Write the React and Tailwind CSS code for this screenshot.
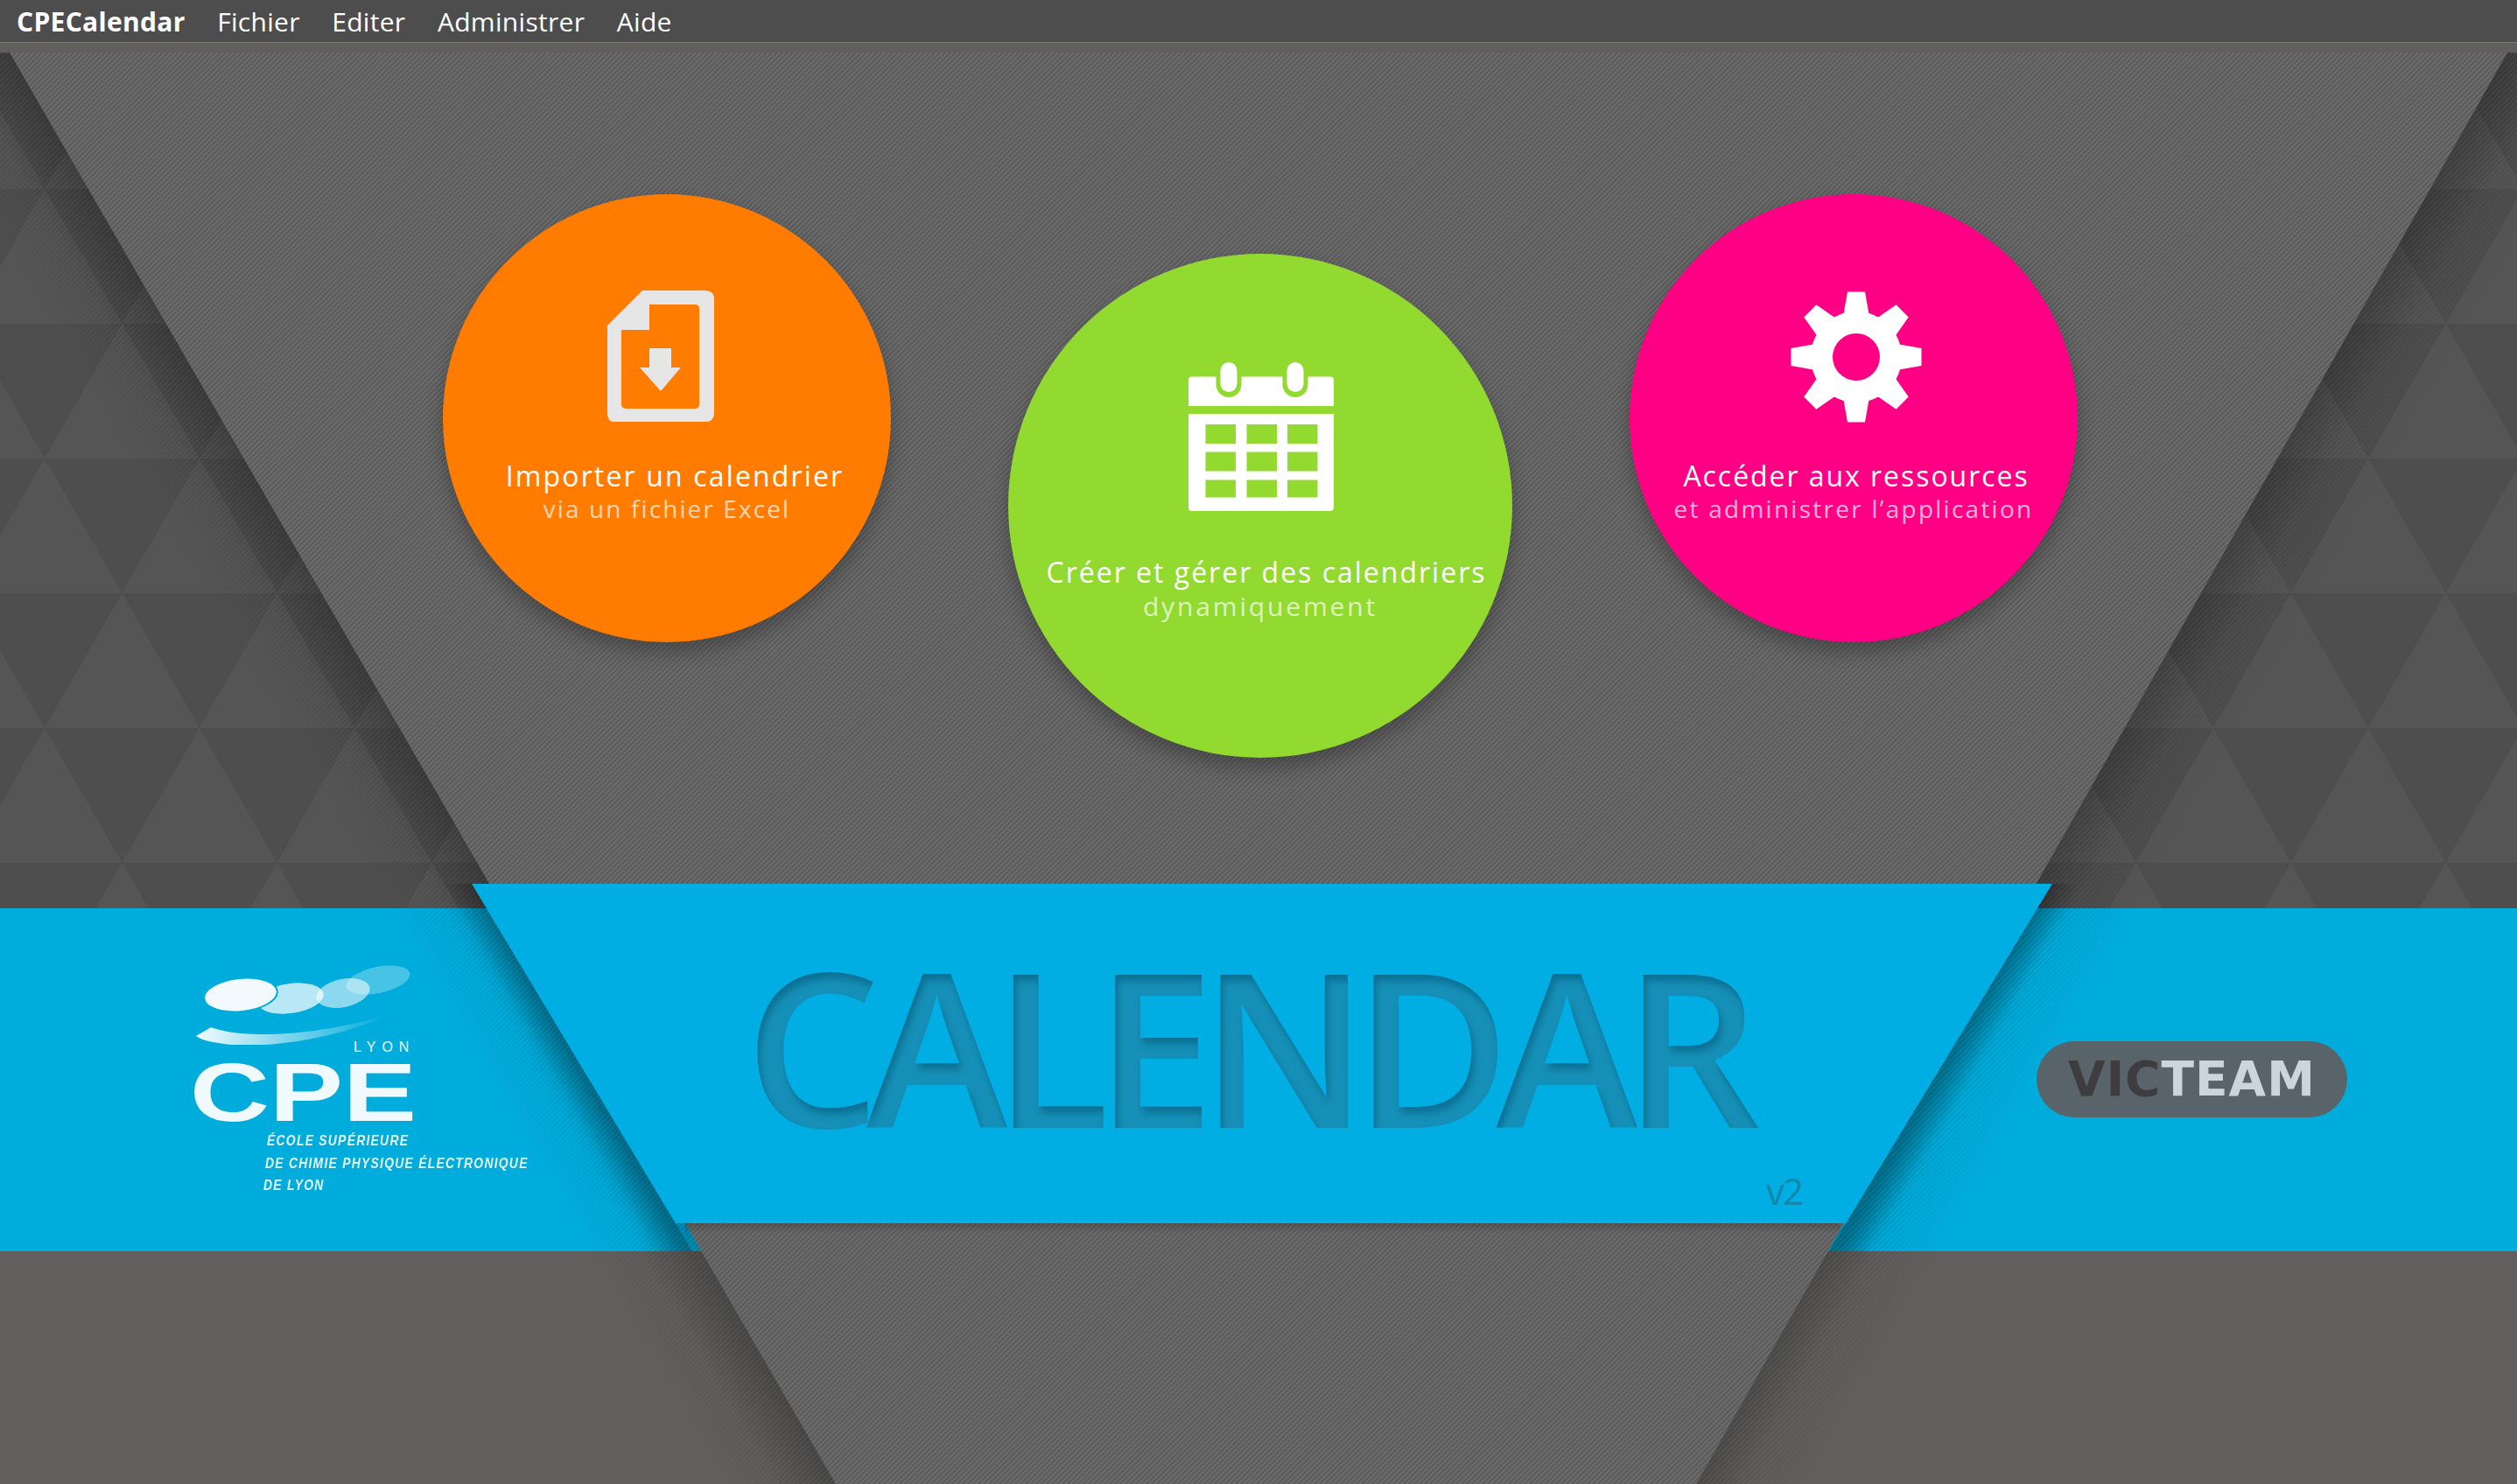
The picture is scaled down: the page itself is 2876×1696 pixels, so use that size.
const menuItems = ["Fichier", "Editer", "Administrer", "Aide"];

function FileIcon() {
  return (
    <svg width="122" height="150" viewBox="0 0 122 150" className="mr-[14px]">
      <path
        fillRule="evenodd"
        fill="#e6e6e6"
        d="M40 0H112Q122 0 122 10V140Q122 150 112 150H8Q0 150 0 140V40ZM48 16V45H16V130Q16 135 22 135H100Q105 135 105 130V21Q105 16 100 16ZM48 66H73V88H84L61 115L37 88H48Z"
      />
    </svg>
  );
}

function CalendarIcon() {
  const xs = [19.5, 66.5, 113];
  const ys = [71, 102.5, 134.5];
  return (
    <svg width="166" height="170" viewBox="0 0 166 170">
      <path fill="#fff" d="M4 16.5H162Q166 16.5 166 20.5V50H0V20.5Q0 16.5 4 16.5Z" />
      <path fill="#fff" d="M0 59H166V166Q166 170 162 170H4Q0 170 0 166Z" />
      {[46, 122].map((x) => (
        <g key={x}>
          <rect x={x - 14.5} y="0" width="29" height="40" rx="14.5" fill="#92d930" />
          <rect x={x - 9.5} y="0" width="19" height="34" rx="9.5" fill="#fff" />
        </g>
      ))}
      {ys.map((y, r) =>
        xs.map((x) => (
          <rect key={`${x}-${y}`} x={x} y={y} width="34.5" height={r === 2 ? 20 : 22} fill="#92d930" />
        )),
      )}
    </svg>
  );
}

function GearIcon() {
  return (
    <svg width="150" height="150" viewBox="-75 -75 150 150" className="ml-[6px]">
      <circle r="52" fill="#fff" />
      {[0, 45, 90, 135, 180, 225, 270, 315].map((deg) => (
        <path key={deg} fill="#fff" transform={`rotate(${deg})`} d="M-15 -46L-10 -74.5H10L15 -46Z" />
      ))}
      <circle r="27" fill="#ff0084" />
    </svg>
  );
}

function Circle({ className, icon, title, sub, titleClass, subClass, iconClass }) {
  return (
    <div className={`flex shrink-0 flex-col items-center rounded-full shadow-[0_12px_22px_rgba(0,0,0,0.28)] ${className}`}>
      <div className={iconClass}>{icon}</div>
      <p className={`whitespace-nowrap text-[32px] leading-[38px] text-white ${titleClass}`}>{title}</p>
      <p className={`whitespace-nowrap leading-[36px] text-white/70 ${subClass}`}>{sub}</p>
    </div>
  );
}

// funnel shape, its shadows and the triangle wallpaper
function Backdrop() {
  return (
    <svg className="pointer-events-none absolute left-0 top-0" width="2876" height="1696" viewBox="0 0 2876 1696">
      <defs>
        <pattern id="tri" patternUnits="userSpaceOnUse" x="51" y="524" width="177" height="308">
          <path fill="#555555" d="M0 0L88.5 154H0ZM177 0V154H88.5ZM88.5 154L177 308H0Z" />
        </pattern>
        <pattern id="twill" patternUnits="userSpaceOnUse" width="6" height="6">
          <rect width="6" height="6" fill="#6c6c6c" />
          <path d="M-1 1L1 -1M0 6L6 0M5 7L7 5" stroke="#5b5b5b" strokeWidth="2.1" />
        </pattern>
        <pattern id="hatch" patternUnits="userSpaceOnUse" width="6" height="6">
          <path d="M-1 1L1 -1M0 6L6 0M5 7L7 5" stroke="#000" strokeOpacity="0.15" strokeWidth="2.4" />
        </pattern>
        <linearGradient id="fadeL" gradientUnits="userSpaceOnUse" x1="11" y1="60" x2="-87" y2="117">
          <stop offset="0" stopColor="#fff" />
          <stop offset="1" stopColor="#fff" stopOpacity="0" />
        </linearGradient>
        <linearGradient id="fadeR" gradientUnits="userSpaceOnUse" x1="2865" y1="60" x2="2963" y2="116">
          <stop offset="0" stopColor="#fff" />
          <stop offset="1" stopColor="#fff" stopOpacity="0" />
        </linearGradient>
        <linearGradient id="darkL" gradientUnits="userSpaceOnUse" x1="11" y1="60" x2="-41" y2="90">
          <stop offset="0" stopColor="#000" stopOpacity="0.18" />
          <stop offset="1" stopColor="#000" stopOpacity="0" />
        </linearGradient>
        <linearGradient id="darkR" gradientUnits="userSpaceOnUse" x1="2865" y1="60" x2="2917" y2="90">
          <stop offset="0" stopColor="#000" stopOpacity="0.18" />
          <stop offset="1" stopColor="#000" stopOpacity="0" />
        </linearGradient>
        <linearGradient id="trapL" gradientUnits="userSpaceOnUse" x1="539" y1="1010" x2="513" y2="1025">
          <stop offset="0" stopColor="#000" stopOpacity="0.22" />
          <stop offset="1" stopColor="#000" stopOpacity="0" />
        </linearGradient>
        <linearGradient id="trapR" gradientUnits="userSpaceOnUse" x1="2345" y1="1010" x2="2371" y2="1025">
          <stop offset="0" stopColor="#000" stopOpacity="0.22" />
          <stop offset="1" stopColor="#000" stopOpacity="0" />
        </linearGradient>
        <linearGradient id="under" x1="0" y1="0" x2="0" y2="1">
          <stop offset="0" stopColor="#000" stopOpacity="0.18" />
          <stop offset="1" stopColor="#000" stopOpacity="0" />
        </linearGradient>
        <mask id="maskL" maskUnits="userSpaceOnUse" x="-300" y="0" width="3500" height="1800">
          <rect x="-300" y="0" width="3500" height="1800" fill="url(#fadeL)" />
        </mask>
        <mask id="maskR" maskUnits="userSpaceOnUse" x="-300" y="0" width="3500" height="1800">
          <rect x="-300" y="0" width="3500" height="1800" fill="url(#fadeR)" />
        </mask>
        <filter id="inset" x="-5%" y="-15%" width="110%" height="130%" colorInterpolationFilters="sRGB">
          <feComponentTransfer in="SourceAlpha" result="inverse">
            <feFuncA type="table" tableValues="1 0" />
          </feComponentTransfer>
          <feGaussianBlur in="inverse" stdDeviation="4" />
          <feOffset dx="3" dy="7" result="offset" />
          <feFlood floodColor="#0a6f92" />
          <feComposite in2="offset" operator="in" />
          <feComposite in2="SourceAlpha" operator="in" result="inner" />
          <feMerge>
            <feMergeNode in="SourceGraphic" />
            <feMergeNode in="inner" />
          </feMerge>
        </filter>
      </defs>

      <rect x="0" y="60" width="2876" height="978" fill="url(#tri)" />

      <polygon points="-189,60 755,1696 955,1696 11,60" fill="url(#hatch)" mask="url(#maskL)" />
      <polygon points="3065,60 2138,1696 1938,1696 2865,60" fill="url(#hatch)" mask="url(#maskR)" />
      <polygon points="-89,60 855,1696 955,1696 11,60" fill="url(#darkL)" />
      <polygon points="2965,60 2038,1696 1938,1696 2865,60" fill="url(#darkR)" />
      <polygon points="489,1010 741,1430 791,1430 539,1010" fill="url(#trapL)" />
      <polygon points="2395,1010 2140,1430 2090,1430 2345,1010" fill="url(#trapR)" />

      <polygon points="11,60 2865,60 1938,1696 955,1696" fill="url(#twill)" />
      <rect x="783" y="1398" width="1320" height="12" fill="url(#under)" />
      <polygon points="539,1010 2345,1010 2109,1398 772,1398" fill="#00aee3" />
    </svg>
  );
}

function CpeLogo() {
  return (
    <div className="flex w-[400px] flex-col">
      <svg width="270" height="96" viewBox="0 0 270 96">
        <defs>
          <linearGradient id="swoosh" x1="0" y1="0" x2="1" y2="0">
            <stop offset="0" stopColor="#fff" stopOpacity="0.95" />
            <stop offset="1" stopColor="#fff" stopOpacity="0" />
          </linearGradient>
        </defs>
        <ellipse cx="212" cy="22" rx="37" ry="15" fill="#fff" fillOpacity="0.28" transform="rotate(-12 212 22)" />
        <ellipse cx="172" cy="37" rx="31" ry="16" fill="#fff" fillOpacity="0.55" transform="rotate(-12 172 37)" />
        <ellipse cx="112" cy="43" rx="38" ry="17" fill="#fff" fillOpacity="0.72" transform="rotate(-8 112 43)" />
        <ellipse cx="55" cy="39" rx="42" ry="19" fill="#f2fafd" stroke="#00acdb" strokeWidth="2" transform="rotate(-6 55 39)" />
        <path fill="url(#swoosh)" d="M4 86L21 76C60 90 140 86 223 62C160 92 70 102 30 94Q12 92 4 86Z" />
      </svg>
      <p className="-mt-[4px] ml-[184px] text-[16px] leading-[13px] tracking-[7px] text-[#e8f6fb] [font-family:'Liberation_Sans',sans-serif]">LYON</p>
      <p className="-ml-[3px] mt-[9px] h-[74px] origin-left scale-x-[1.34] text-[94px] font-bold leading-[74px] text-[#f0f9fc] [font-family:'Liberation_Sans',sans-serif]">CPE</p>
      <div className="mt-[5px] flex flex-col text-[17px] font-bold italic leading-[25.5px] tracking-[1.5px] text-[#e4f5fa] [font-family:'Liberation_Sans',sans-serif]">
        <span className="ml-[85px] origin-left scale-x-[0.82] whitespace-nowrap">ÉCOLE SUPÉRIEURE</span>
        <span className="ml-[83px] origin-left scale-x-[0.82] whitespace-nowrap">DE CHIMIE PHYSIQUE ÉLECTRONIQUE</span>
        <span className="ml-[81px] origin-left scale-x-[0.82] whitespace-nowrap">DE LYON</span>
      </div>
    </div>
  );
}

export default function App() {
  return (
    <div className="relative flex h-[1696px] w-[2876px] flex-col overflow-hidden bg-[#605f5d] [font-family:'Open_Sans',sans-serif]">
      <Backdrop />

      <header className="relative z-10 flex h-[49px] shrink-0 items-center gap-[36.5px] border-b border-[#7c7b78] bg-[#4d4d4d] px-[19px] text-[30px] tracking-[0.3px] text-white">
        <span className="font-bold">CPECalendar</span>
        {menuItems.map((item) => (
          <span key={item}>{item}</span>
        ))}
      </header>
      <div className="h-[11px] shrink-0" />

      <section className="h-[978px] shrink-0 bg-[#4e4e4e]">
        <div className="relative z-10 flex items-start gap-[134px] pl-[506px] pt-[162px]">
          <Circle
            className="h-[512px] w-[512px] bg-[#ff7c00]"
            icon={<FileIcon />}
            iconClass="mt-[110px] mb-[43px]"
            title="Importer un calendrier"
            sub="via un fichier Excel"
            titleClass="ml-[18px] tracking-[2.15px]"
            subClass="text-[28px] tracking-[2.1px]"
          />
          <Circle
            className="mt-[68px] h-[576px] w-[576px] bg-[#92d930]"
            icon={<CalendarIcon />}
            iconClass="mt-[124px] mb-[51px] ml-[2px]"
            title="Créer et gérer des calendriers"
            sub="dynamiquement"
            titleClass="ml-[14px] tracking-[2px]"
            subClass="mt-[2px] text-[30px] tracking-[2.85px]"
          />
          <Circle
            className="h-[512px] w-[512px] bg-[#ff0084]"
            icon={<GearIcon />}
            iconClass="mt-[111px] mb-[42px]"
            title="Accéder aux ressources"
            sub="et administrer l’application"
            titleClass="ml-[6px] tracking-[1.95px]"
            subClass="text-[28px] tracking-[2.25px]"
          />
        </div>
      </section>

      <section className="flex h-[392px] shrink-0 bg-[#00acdb]">
        <div className="relative z-10 flex w-full">
          <div className="w-[851px] shrink-0 pl-[220px] pt-[60px]">
            <CpeLogo />
          </div>
          <div className="flex w-[1208px] shrink-0 flex-col pt-[16px]">
            <h1 className="whitespace-nowrap text-[244px] font-semibold leading-[280px] tracking-[-16px] text-[#1690b8] [filter:url(#inset)]">
              CALENDAR
            </h1>
            <span className="mt-[2px] self-end text-[42px] leading-[50px] tracking-[-2px] text-[#1286ab]">v2</span>
          </div>
          <div className="ml-auto mr-[194px] mt-[152px] flex h-[87px] w-[355px] items-center justify-center rounded-full bg-[#59636a] text-[55px] font-bold tracking-[1px] [font-family:'DejaVu_Sans',sans-serif]">
            <span className="text-[#3d3d3f]">VIC</span>
            <span className="text-[#ccd5de]">TEAM</span>
          </div>
        </div>
      </section>
    </div>
  );
}
